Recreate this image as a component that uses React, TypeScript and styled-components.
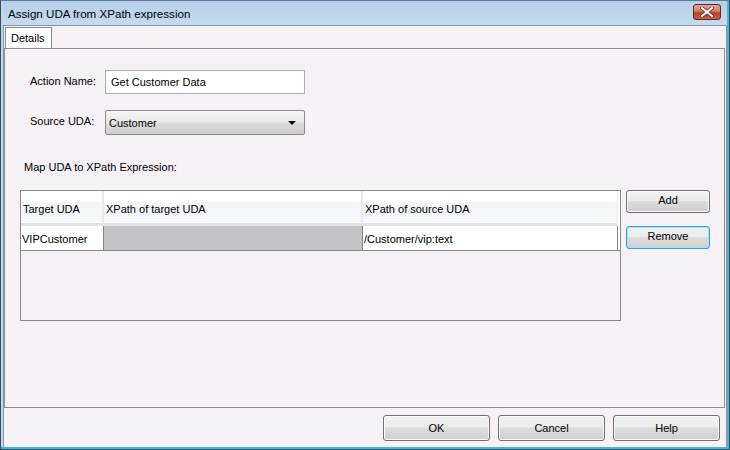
import React from 'react';
import styled, { createGlobalStyle } from 'styled-components';

const GlobalStyle = createGlobalStyle`
  html, body {
    margin: 0;
    padding: 0;
    background: #ffffff;
  }
  body {
    font-family: "Liberation Sans", Arial, sans-serif;
    font-size: 11px;
    color: #000000;
  }
`;

export default function App() {
  return (
    <>
      <GlobalStyle />
      <Window>
        <TitleBar>
          <span className='title'>Assign UDA from XPath expression</span>
          <CloseButton>
            <svg width='14' height='10' viewBox='0 0 14 10'>
              <path d='M2 1 L12 9 M12 1 L2 9' stroke='#6b2b22' strokeWidth='3.6' strokeLinecap='square' />
              <path d='M2 1 L12 9 M12 1 L2 9' stroke='#ffffff' strokeWidth='2' strokeLinecap='square' />
            </svg>
          </CloseButton>
        </TitleBar>
        <Body>
          <TabStrip>
            <Tab>Details</Tab>
          </TabStrip>
          <TabPanel>
            <FieldRow>
              <Label>Action Name:</Label>
              <TextInput>Get Customer Data</TextInput>
            </FieldRow>
            <FieldRow>
              <Label>Source UDA:</Label>
              <Select>
                <span>Customer</span>
                <svg width='8' height='4' viewBox='0 0 8 4'>
                  <path d='M0 0 H8 L4 4 Z' fill='#000' />
                </svg>
              </Select>
            </FieldRow>
            <SectionLabel>Map UDA to XPath Expression:</SectionLabel>
            <MapArea>
              <Grid>
                <HeaderRow>
                  <HeaderCell width={83}>Target UDA</HeaderCell>
                  <HeaderCell width={259}>XPath of target UDA</HeaderCell>
                  <HeaderCell width={255} last>XPath of source UDA</HeaderCell>
                </HeaderRow>
                <DataRow>
                  <Cell width={83}>VIPCustomer</Cell>
                  <Cell width={259} disabled />
                  <Cell width={255}>/Customer/vip:text</Cell>
                </DataRow>
              </Grid>
              <SideButtons>
                <Button>Add</Button>
                <Button focused>Remove</Button>
              </SideButtons>
            </MapArea>
          </TabPanel>
          <Footer>
            <Button wide>OK</Button>
            <Button wide>Cancel</Button>
            <Button wide>Help</Button>
          </Footer>
        </Body>
      </Window>
    </>
  );
}

const Window = styled.div`
  width: 730px;
  height: 450px;
  box-sizing: border-box;
  display: flex;
  flex-direction: column;
  background: #c3d7ec;
  border: 1px solid #3a4a5c;
  border-top-color: #5e7a96;
  padding: 0 2px 2px 2px;
  box-shadow: inset -2px -2px 0 #3fb9e0;
`;

const TitleBar = styled.div`
  height: 24px;
  flex: none;
  display: flex;
  align-items: center;
  justify-content: space-between;
  padding: 0 6px 0 5px;
  background: linear-gradient(#b7cfe8, #c6daef);
  .title {
    font-size: 11.6px;
    color: #000;
    margin-top: 1px;
  }
`;

const CloseButton = styled.div`
  width: 28px;
  height: 16px;
  margin-top: -2px;
  display: flex;
  align-items: center;
  justify-content: center;
  border: 1px solid #5b2a24;
  border-radius: 3px;
  box-sizing: border-box;
  background: linear-gradient(#e3a596 0%, #d47a67 45%, #bf3e28 55%, #cf5b42 100%);
`;

const Body = styled.div`
  flex: 1;
  display: flex;
  flex-direction: column;
  background: #f5f1f5;
  border: 1px solid #8696a8;
  border-bottom: none;
`;

const TabStrip = styled.div`
  height: 21px;
  display: flex;
  padding-left: 1px;
  margin-top: 1px;
`;

const Tab = styled.div`
  height: 21px;
  box-sizing: border-box;
  padding: 4px 6px 0 5px;
  border: 1px solid #898c95;
  border-bottom: none;
  background: #ffffff;
  position: relative;
  z-index: 1;
  margin-bottom: -1px;
`;

const TabPanel = styled.div`
  height: 360px;
  box-sizing: border-box;
  border: 1px solid #898c95;
  margin: 0 1px 0 0;
  padding: 21px 0 0 15px;
  display: flex;
  flex-direction: column;
`;

const FieldRow = styled.div`
  display: flex;
  align-items: center;
  height: 24px;
  margin-bottom: 16px;
  padding-left: 10px;
`;

const Label = styled.div`
  width: 75px;
  margin-top: -2px;
`;

const TextInput = styled.div`
  width: 200px;
  height: 24px;
  box-sizing: border-box;
  border: 1px solid #abadb3;
  background: #ffffff;
  padding: 5px 0 0 5px;
`;

const Select = styled.div`
  width: 200px;
  height: 25px;
  box-sizing: border-box;
  border: 1px solid #8a8a8a;
  border-radius: 2px;
  background: linear-gradient(#f3f3f3 0%, #ebebeb 45%, #dcdcdc 55%, #cfcfcf 100%);
  display: flex;
  align-items: center;
  justify-content: space-between;
  padding: 1px 8px 0 3px;
`;

const SectionLabel = styled.div`
  margin-top: 11px;
  padding-left: 4px;
`;

const MapArea = styled.div`
  display: flex;
  margin-top: 17px;
`;

const Grid = styled.div`
  width: 601px;
  height: 131px;
  box-sizing: border-box;
  border: 1px solid #828790;
  background: #f5f1f5;
`;

const HeaderRow = styled.div`
  display: flex;
  height: 35px;
  background: #ffffff;
`;

const HeaderCell = styled.div<{ width: number; last?: boolean }>`
  width: ${(p) => p.width}px;
  box-sizing: border-box;
  padding: 12px 0 0 2px;
  background: linear-gradient(#ffffff 0%, #ffffff 35%, #f4f6fa 36%, #f4f6fa 100%);
  border-right: ${(p) => (p.last ? '1px solid #e6e6e6' : '2px solid #e9e9ee')};
  border-bottom: 3px solid #e3e3e8;
  box-shadow: inset 0 -1px 0 #ffffff;
`;

const DataRow = styled.div`
  display: flex;
  height: 24px;
  background: #ffffff;
  border-bottom: 1px solid #828790;
`;

const Cell = styled.div<{ width: number; disabled?: boolean }>`
  width: ${(p) => p.width}px;
  box-sizing: border-box;
  padding: 7px 0 0 1px;
  background: ${(p) => (p.disabled ? '#c3c2c6' : '#ffffff')};
  border-right: 1px solid #828790;
`;

const SideButtons = styled.div`
  display: flex;
  flex-direction: column;
  gap: 13px;
  margin-left: 5px;
`;

const Button = styled.div<{ wide?: boolean; focused?: boolean }>`
  width: ${(p) => (p.wide ? '107px' : '84px')};
  height: ${(p) => (p.wide ? '26px' : '23px')};
  box-sizing: border-box;
  border: 1px solid ${(p) => (p.focused ? '#3c9fd4' : '#707070')};
  border-radius: 3px;
  background: linear-gradient(#f2f2f2 0%, #ebebeb 45%, #dddddd 50%, #cfcfcf 100%);
  box-shadow: inset 0 0 0 1px ${(p) => (p.focused ? '#a6e1f7' : '#fbfbfb')};
  display: flex;
  align-items: center;
  justify-content: center;
  padding-bottom: ${(p) => (p.wide ? '0' : '3px')};
`;

const Footer = styled.div`
  flex: 1;
  display: flex;
  justify-content: flex-end;
  align-items: flex-start;
  gap: 8px;
  padding: 7px 6px 0 0;
`;
